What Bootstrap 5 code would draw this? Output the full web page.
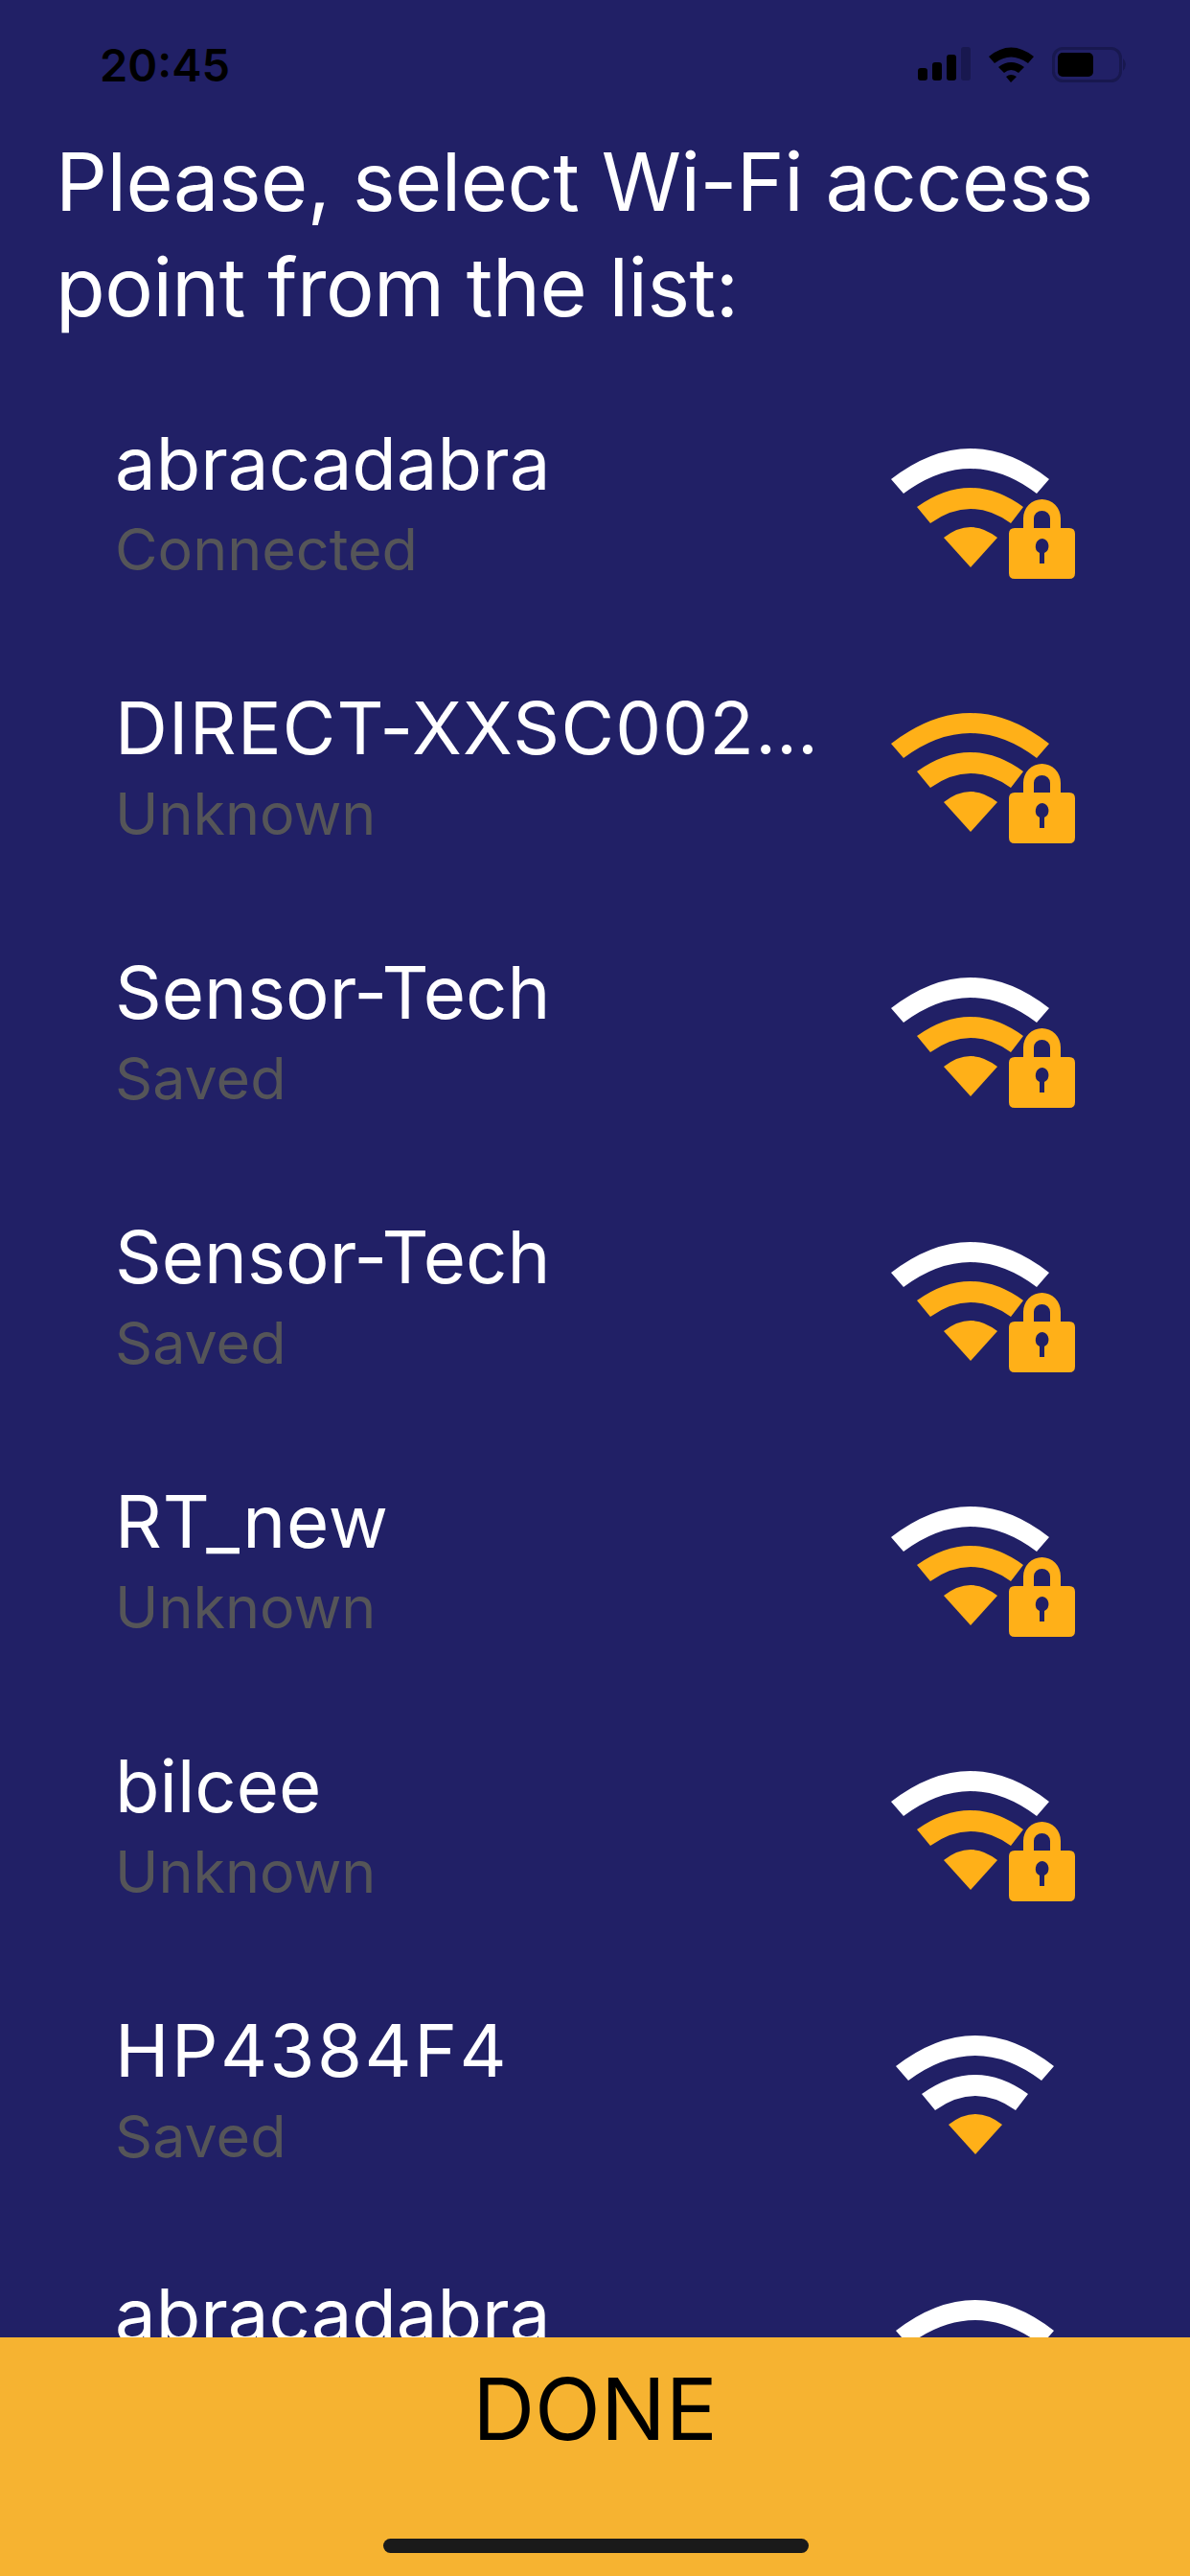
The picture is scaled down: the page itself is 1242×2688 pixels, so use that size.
<!DOCTYPE html>
<html lang="en">
<head>
  <meta charset="UTF-8">
  <title>Wi-Fi access points</title>
  <meta name="viewport" content="width=device-width, initial-scale=1">
  <link href="https://cdn.jsdelivr.net/npm/bootstrap@5.3.3/dist/css/bootstrap.min.css" rel="stylesheet">
  <style>
    body { background: #212066; font-family: Inter, "Liberation Sans", sans-serif; }
    .phone-page { width: 1242px; height: 2688px; overflow: hidden; }
    .status-row { height: 134px; padding: 49px 64px 0 104px; color: #000; }
    .status-time { font-size: 47px; font-weight: 600; line-height: 37px; }
    .page-title { font-size: 84.500px; line-height: 110px; font-weight: 400; color: #fff; padding: 0 30px 0 58px; margin: 0 0 82px; letter-spacing: -0.5px; }
    .ap-list { min-height: 0; }
    .ap-row { height: 276px; padding: 0 0 0 120px; }
    .ap-text { width: 810px; }
    .ap-name { font-size: 76px; line-height: 94px; color: #fff; white-space: nowrap; }
    .ap-state { font-size: 61px; line-height: 86px; color: #555558; }
    .ap-icon { width: 200px; height: 150px; margin-top: 24px; }
    .done-bar { height: 249px; background: #f6b331; flex-shrink: 0; color: #000; font-size: 90px; line-height: 110px; padding-top: 20px; }
    .home-line { width: 444px; height: 15px; background: #1a1a1a; border-radius: 8px; left: 400px; bottom: 24px; }
  </style>
</head>
<body class="m-0">
  <svg width="0" height="0" class="position-absolute">
    <defs>
      <path id="arc3" d="M0 40 Q83 -24 165 40 L152 55 Q83 3 13 55 Z"/>
      <path id="arc2" d="M27 69 Q83 29 138 69 L125 86 Q83 56 41 86 Z"/>
      <path id="arc1" d="M55 101 Q83 79 111 101 L83 132 Z"/>
      <path id="lock" fill-rule="evenodd" d="M138 91 V81 A19.500 20 0 0 1 177 81 V91 H186 Q192 91 192 97 V138 Q192 144 186 144 H129 Q123 144 123 138 V97 Q123 91 129 91 Z M149 91 H166 V81 A8.500 8 0 0 0 149 81 Z M158 102 A8 8 0 0 0 155 117 V128 H160 V117 A8 8 0 0 0 158 102 Z"/>
    </defs>
  </svg>

  <div class="phone-page d-flex flex-column position-relative">
    <div class="status-row d-flex justify-content-between align-items-start flex-shrink-0">
      <div class="status-time">20:45</div>
      <svg width="220" height="38" viewBox="0 0 220 38">
        <rect x="0" y="22" width="10" height="13" rx="3" fill="#000"/>
        <rect x="15" y="16" width="10" height="19" rx="3" fill="#000"/>
        <rect x="30" y="8" width="10" height="27" rx="3" fill="#000"/>
        <rect x="45" y="0" width="10" height="35" rx="3" fill="#18184f"/>
        <path d="M74 10 Q97 -9 121 10 L115 17 Q97 4 80 17 Z M84 21 Q97 11 111 21 L105 27 Q97 21 90 27 Z M92 31 Q97 27 103 31 L97 37 Z" fill="#000"/>
        <rect x="141.500" y="1.500" width="70" height="34" rx="10" fill="none" stroke="#18184f" stroke-width="3"/>
        <rect x="146" y="6" width="37" height="25" rx="5" fill="#000"/>
        <path d="M214 12 Q220 18 214 25 Z" fill="#18184f"/>
      </svg>
    </div>

    <h1 class="page-title flex-shrink-0">Please, select Wi-Fi access point from the list:</h1>

    <div class="ap-list flex-grow-1 overflow-hidden" id="ap-list"></div>

    <div class="done-bar text-center">DONE</div>
    <div class="home-line position-absolute"></div>
  </div>

  <script src="https://cdn.jsdelivr.net/npm/bootstrap@5.3.3/dist/js/bootstrap.bundle.min.js"></script>
  <script>
    // bars: how many arcs are lit (amber) counted from the centre
    // track: letter spacing for names where Inter runs narrower than the original font
    const points = [
      { name: "abracadabra", state: "Connected", bars: 2, lock: true, track: 0 },
      { name: "DIRECT-XXSC002…", state: "Unknown", bars: 3, lock: true, track: 1.25 },
      { name: "Sensor-Tech", state: "Saved", bars: 2, lock: true, track: 0 },
      { name: "Sensor-Tech", state: "Saved", bars: 2, lock: true, track: 0 },
      { name: "RT_new", state: "Unknown", bars: 2, lock: true, track: 0.8 },
      { name: "bilcee", state: "Unknown", bars: 2, lock: true, track: 0 },
      { name: "HP4384F4", state: "Saved", bars: 1, lock: false, track: 2.5 },
      { name: "abracadabra", state: "", bars: 1, lock: false, track: 0 }
    ];

    const list = document.getElementById('ap-list');
    points.forEach(p => {
      const shift = p.lock ? 0 : 5;
      const row = document.createElement('div');
      row.className = 'ap-row d-flex align-items-start';
      row.innerHTML = `
        <div class="ap-text">
          <div class="ap-name" style="letter-spacing: ${p.track}px">${p.name}</div>
          <div class="ap-state">${p.state}</div>
        </div>
        <svg class="ap-icon" viewBox="0 0 200 150">
          <g transform="translate(${shift} 0)">
            <use href="#arc3" fill="${p.bars >= 3 ? '#ffb018' : '#fff'}"/>
            <use href="#arc2" fill="${p.bars >= 2 ? '#ffb018' : '#fff'}"/>
            <use href="#arc1" fill="#ffb018"/>
            ${p.lock ? '<use href="#lock" fill="#ffb018"/>' : ''}
          </g>
        </svg>`;
      list.appendChild(row);
    });
  </script>
</body>
</html>
